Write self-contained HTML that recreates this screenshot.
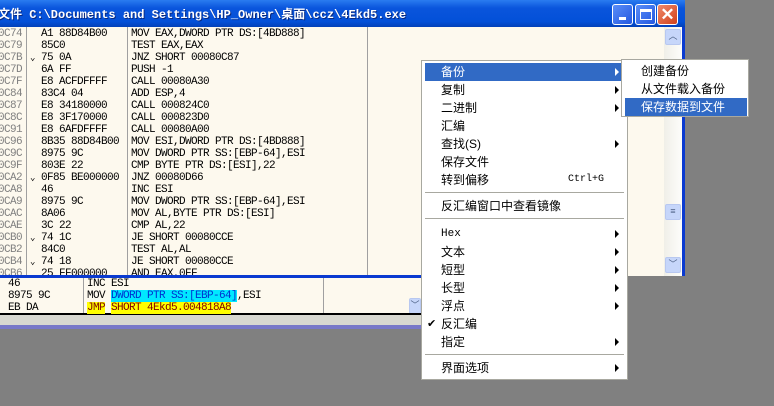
<!DOCTYPE html>
<html><head><meta charset="utf-8"><style>
*{margin:0;padding:0;box-sizing:border-box}
body{width:774px;height:406px;background:#808080;position:relative;overflow:hidden;font-family:"Liberation Mono","Noto Sans CJK SC",monospace}
.abs{position:absolute}
.title{left:0;top:0;width:685px;height:27px;background:linear-gradient(#2a7cf0,#0a55dc 30%,#0350d8 80%,#0340b8);}
.title span{position:absolute;left:-2px;top:5px;color:#fff;font:bold 12px "Liberation Mono","Noto Sans CJK SC",monospace;text-shadow:1px 1px #0a2a80;white-space:pre}
.btn{top:4px;width:21px;height:21px;border:1px solid #fff;border-radius:3px;background:linear-gradient(135deg,#5a8ef8,#2458e0)}
.main{left:0;top:27px;width:685px;height:249px;background:#fdf9ee;border-right:3px solid #0a3ad0}
.row{position:absolute;height:12px;font-size:11px;letter-spacing:-0.6px;line-height:12px;white-space:pre;color:#000}
.vl{position:absolute;width:1px;background:#a0a0a0}
.sb{position:absolute;background:linear-gradient(90deg,#f0efe8,#fdfdfb)}
.sbtn{position:absolute;width:16px;height:16px;border:1px solid #b8c8f0;border-radius:2px;background:#c6d6fa;color:#4d6185;font-size:9px;text-align:center;line-height:14px}
.menu{background:#fff;border:1px solid #a8a8a0;font-family:"Liberation Sans","Noto Sans CJK SC",sans-serif;font-size:12px}
.mi{position:absolute;left:3px;height:18px;line-height:18px;white-space:pre;color:#000}
.hl{background:#316ac5;color:#fff}
.ar{position:absolute;width:0;height:0;border-top:4px solid transparent;border-bottom:4px solid transparent;border-left:4px solid #000}
.sep{position:absolute;left:3px;height:1px;background:#a8a8a0}
</style></head><body>
<div class="abs title"><span>文件 C:\Documents and Settings\HP_Owner\桌面\ccz\4Ekd5.exe</span>
<div class="abs btn" style="left:612px"><div class="abs" style="left:6px;top:12px;width:7px;height:3px;background:#fff"></div></div>
<div class="abs btn" style="left:635px"><div class="abs" style="left:4px;top:4px;width:12px;height:11px;border:1px solid #fff;border-top-width:3px"></div></div>
<div class="abs btn" style="left:657px;background:linear-gradient(135deg,#f08a6a,#d0401c);color:#fff;font:bold 17px 'Liberation Sans';text-align:center;line-height:19px">✕</div>
</div>
<div class="abs main">
<div class="vl" style="left:26px;top:0;height:249px"></div>
<div class="vl" style="left:127px;top:0;height:249px"></div>
<div class="vl" style="left:367px;top:0;height:249px"></div>
<div class="sb" style="left:664px;top:0;width:18px;height:249px"></div>
<div class="sbtn" style="left:665px;top:2px">︿</div>
<div class="sbtn" style="left:665px;top:177px">≡</div>
<div class="sbtn" style="left:665px;top:230px">﹀</div>
</div>
<div id="rows"></div>
<div class="abs" style="left:0;top:275px;width:421px;height:3px;background:#0a3ad0"></div>
<div class="abs" style="left:0;top:278px;width:421px;height:36px;background:#fdf9ee"></div>
<div class="vl" style="left:83px;top:278px;height:36px"></div>
<div class="vl" style="left:323px;top:278px;height:36px"></div>
<div class="sbtn" style="left:409px;top:298px;width:12px">﹀</div>
<div class="abs" style="left:0;top:313px;width:421px;height:2px;background:#000"></div>
<div class="abs" style="left:0;top:315px;width:421px;height:10px;background:#d8d8d0"></div>
<div class="abs" style="left:0;top:325px;width:421px;height:4px;background:#7878c8"></div>
<div class="row" style="left:8px;top:278px">46</div>
<div class="row" style="left:8px;top:290px">8975 9C</div>
<div class="row" style="left:8px;top:302px">EB DA</div>
<div class="row" style="left:87px;top:278px">INC ESI</div>
<div class="row" style="left:87px;top:290px">MOV <span style="background:#00e8ff;color:#0030d0">DWORD PTR SS:[EBP-64]</span>,ESI</div>
<div class="row" style="left:87px;top:302px"><span style="background:#ffff00;color:#800000">JMP</span> <span style="background:#ffff00;color:#800000">SHORT 4Ekd5.004818A8</span></div>

<div class="abs menu" style="left:421px;top:60px;width:207px;height:320px">
<div class="mi hl" style="top:2px;width:199px;padding-left:16px">备份</div><div class="ar" style="left:193px;top:7px;border-left-color:#fff"></div>
<div class="mi" style="top:20px;padding-left:16px">复制</div><div class="ar" style="left:193px;top:25px"></div>
<div class="mi" style="top:38px;padding-left:16px">二进制</div><div class="ar" style="left:193px;top:43px"></div>
<div class="mi" style="top:56px;padding-left:16px">汇编</div>
<div class="mi" style="top:74px;padding-left:16px">查找(S)</div><div class="ar" style="left:193px;top:79px"></div>
<div class="mi" style="top:92px;padding-left:16px">保存文件</div>
<div class="mi" style="top:110px;padding-left:16px">转到偏移</div><div class="mi" style="top:110px;left:146px;font-family:'Liberation Mono';font-size:10px">Ctrl+G</div>
<div class="sep" style="top:131px;width:199px"></div>
<div class="mi" style="top:136px;padding-left:16px">反汇编窗口中查看镜像</div>
<div class="sep" style="top:157px;width:199px"></div>
<div class="mi" style="top:164px;padding-left:16px;font-family:'Liberation Mono';font-size:11px">Hex</div><div class="ar" style="left:193px;top:169px"></div>
<div class="mi" style="top:182px;padding-left:16px">文本</div><div class="ar" style="left:193px;top:187px"></div>
<div class="mi" style="top:200px;padding-left:16px">短型</div><div class="ar" style="left:193px;top:205px"></div>
<div class="mi" style="top:218px;padding-left:16px">长型</div><div class="ar" style="left:193px;top:223px"></div>
<div class="mi" style="top:236px;padding-left:16px">浮点</div><div class="ar" style="left:193px;top:241px"></div>
<div class="mi" style="top:254px;left:5px;font-size:11px">✔</div><div class="mi" style="top:254px;padding-left:16px">反汇编</div>
<div class="mi" style="top:272px;padding-left:16px">指定</div><div class="ar" style="left:193px;top:277px"></div>
<div class="sep" style="top:293px;width:199px"></div>
<div class="mi" style="top:298px;padding-left:16px">界面选项</div><div class="ar" style="left:193px;top:303px"></div>
</div>
<div class="abs menu" style="left:621px;top:59px;width:128px;height:58px">
<div class="mi" style="top:2px;padding-left:16px">创建备份</div>
<div class="mi" style="top:20px;padding-left:16px">从文件载入备份</div>
<div class="mi hl" style="top:38px;width:122px;padding-left:16px">保存数据到文件</div>
</div>
<script>
var d=[["0C74","","A1 88D84B00","MOV EAX,DWORD PTR DS:[4BD888]"],["0C79","","85C0","TEST EAX,EAX"],["0C7B","⌄","75 0A","JNZ SHORT 00080C87"],["0C7D","","6A FF","PUSH -1"],["0C7F","","E8 ACFDFFFF","CALL 00080A30"],["0C84","","83C4 04","ADD ESP,4"],["0C87","","E8 34180000","CALL 000824C0"],["0C8C","","E8 3F170000","CALL 000823D0"],["0C91","","E8 6AFDFFFF","CALL 00080A00"],["0C96","","8B35 88D84B00","MOV ESI,DWORD PTR DS:[4BD888]"],["0C9C","","8975 9C","MOV DWORD PTR SS:[EBP-64],ESI"],["0C9F","","803E 22","CMP BYTE PTR DS:[ESI],22"],["0CA2","⌄","0F85 BE000000","JNZ 00080D66"],["0CA8","","46","INC ESI"],["0CA9","","8975 9C","MOV DWORD PTR SS:[EBP-64],ESI"],["0CAC","","8A06","MOV AL,BYTE PTR DS:[ESI]"],["0CAE","","3C 22","CMP AL,22"],["0CB0","⌄","74 1C","JE SHORT 00080CCE"],["0CB2","","84C0","TEST AL,AL"],["0CB4","⌄","74 18","JE SHORT 00080CCE"],["0CB6","","25 FF000000","AND EAX,0FF"]];
var h="";d.forEach(function(r,i){var t=28+i*12;
h+='<div class="row" style="left:-2px;top:'+t+'px;color:#808080">'+r[0]+'</div><div class="row" style="left:30px;top:'+t+'px;font-size:9px">'+r[1]+'</div><div class="row" style="left:41px;top:'+t+'px">'+r[2]+'</div><div class="row" style="left:131px;top:'+t+'px">'+r[3]+'</div>';});
document.getElementById("rows").innerHTML=h;
</script>
</body></html>
